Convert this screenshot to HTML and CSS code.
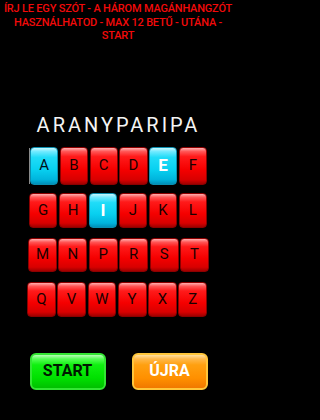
FILE: index.html
```html
<!DOCTYPE html>
<html lang="hu">
<head>
<meta charset="utf-8">
<title>Aranyparipa</title>
<link rel="stylesheet" href="styles.css">
</head>
<body>
<div class="screen">
  <p class="hint">ÍRJ LE EGY SZÓT - A HÁROM MAGÁNHANGZÓT HASZNÁLHATOD - MAX 12 BETŰ - UTÁNA - START</p>
  <h1 class="word">ARANYPARIPA</h1>
  <div class="keys">
    <div class="row row-first">
      <span class="caret"></span>
      <button class="key key-on">A</button>
      <button class="key">B</button>
      <button class="key">C</button>
      <button class="key">D</button>
      <button class="key key-on key-strong">E</button>
      <button class="key">F</button>
    </div>
    <div class="row row-second">
      <button class="key">G</button>
      <button class="key">H</button>
      <button class="key key-on key-strong">I</button>
      <button class="key">J</button>
      <button class="key">K</button>
      <button class="key">L</button>
    </div>
    <div class="row row-third">
      <button class="key">M</button>
      <button class="key">N</button>
      <button class="key">P</button>
      <button class="key">R</button>
      <button class="key">S</button>
      <button class="key">T</button>
    </div>
    <div class="row row-fourth">
      <button class="key">Q</button>
      <button class="key">V</button>
      <button class="key">W</button>
      <button class="key">Y</button>
      <button class="key">X</button>
      <button class="key">Z</button>
    </div>
  </div>
  <div class="actions">
    <button class="action action-start">START</button>
    <button class="action action-reset">ÚJRA</button>
  </div>
</div>
</body>
</html>
```
FILE: styles.css
```css
html, body {
  margin: 0;
  padding: 0;
  background: #000;
}
body {
  width: 236px;
  height: 420px;
  overflow: hidden;
  font-family: Roboto, "Liberation Sans", sans-serif;
}
.screen {
  display: flex;
  flex-direction: column;
  align-items: center;
}
.hint {
  margin: 2px 0 0;
  padding: 0 2px;
  text-align: center;
  color: #f20a0a;
  font-size: 11px;
  line-height: 13.5px;
  font-weight: 500;
  letter-spacing: -0.2px;
}
.word {
  margin: 70px 0 0 1px;
  color: #f4f4f4;
  font-size: 20px;
  line-height: 24px;
  font-weight: 400;
  letter-spacing: 3px;
}
.keys {
  margin-top: 10px;
  width: 178px;
  display: flex;
  flex-direction: column;
  gap: 9px;
}
.row {
  display: grid;
  grid-template-columns: repeat(6, 1fr);
  gap: 1.5px;
  height: 35px;
  position: relative;
}
.row-first {
  height: 38px;
  margin-left: 1px;
  margin-bottom: -2px;
}
.row-second {
  margin-top: 1px;
}
.row-third {
  height: 34px;
  margin: 1px -2px 0 -1px;
}
.row-fourth {
  margin: 1px 0 0 -2px;
}
.caret {
  position: absolute;
  left: -1px;
  top: 1px;
  width: 1px;
  height: 36px;
  background: #8a8a8a;
}
.key {
  margin: 0;
  padding: 0;
  border: 1px solid #8c0000;
  border-radius: 4px;
  background: linear-gradient(to bottom, #ffb0b0 0%, #ff5555 10%, #ff1a1a 24%, #f50000 60%, #d80000 88%, #a00000 100%);
  color: #1a0000;
  font-family: Roboto, "Liberation Sans", sans-serif;
  font-size: 15px;
  font-weight: 400;
  line-height: 1;
}
.key-on {
  border-color: #0a8fb0;
  background: linear-gradient(to bottom, #c8f8ff 0%, #70eaff 10%, #20dcf8 26%, #08d0f0 60%, #00b4dc 88%, #0090b8 100%);
  color: #001018;
}
.key-strong {
  color: #ffffff;
  font-weight: 700;
  font-size: 17px;
}
.actions {
  margin-top: 36px;
  width: 178px;
  display: flex;
  justify-content: space-between;
  margin-left: 1px;
}
.action {
  margin: 0;
  padding: 0;
  width: 76px;
  height: 37px;
  border-radius: 6px;
  font-family: Roboto, "Liberation Sans", sans-serif;
  font-size: 16px;
  font-weight: 700;
  line-height: 1;
}
.action-start {
  border: 2px solid #33e633;
  background: linear-gradient(to bottom, #b8ffb8 0%, #55ff55 12%, #10f010 30%, #00e000 70%, #00c000 100%);
  color: #001800;
}
.action-reset {
  border: 2px solid #ffc63a;
  background: linear-gradient(to bottom, #ffe0a0 0%, #ffb84a 12%, #ffa010 30%, #ff9000 70%, #f07800 100%);
  color: #ffffff;
}
```
